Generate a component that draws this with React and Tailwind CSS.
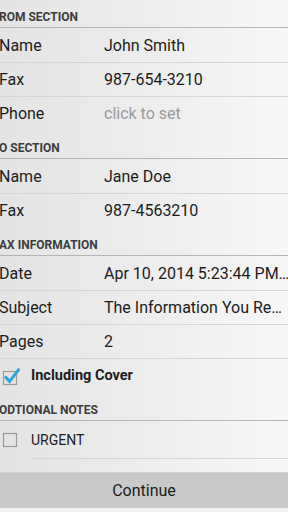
const font = { fontFamily: "Roboto, 'Liberation Sans', sans-serif" };

function Header({ text }) {
  return (
    <div className="h-[29px] flex flex-col">
      <div className="pt-[10px] leading-[14px] -ml-[1px] text-[12px] font-bold text-[#3c3c3c] whitespace-nowrap">
        {text}
      </div>
      <div className="mt-[3px] h-[1px] bg-[#b5b5b5]" />
    </div>
  );
}

function Row({ label, value, muted, last }) {
  return (
    <div className="h-[34px] flex flex-col">
      <div className="h-[33px] flex items-center text-[16px] text-[#1c1c1c] whitespace-nowrap">
        <div className="w-[105px] shrink-0 -ml-[1px]">{label}</div>
        <div className={muted ? "text-[#9a9a9a]" : "text-[#1c1c1c]"}>{value}</div>
      </div>
      {!last && <div className="h-[1px] bg-[#d6d6d6]" />}
    </div>
  );
}

function CheckedBox() {
  return (
    <svg width="18" height="18" viewBox="0 0 18 18">
      <rect x="1.5" y="3.5" width="13" height="13" fill="none" stroke="#9a9a9a" strokeWidth="1.2" />
      <path d="M4 9.5 L7.5 13.5 L16.5 2" fill="none" stroke="#2aa5d8" strokeWidth="3" strokeLinecap="square" />
    </svg>
  );
}

function EmptyBox() {
  return (
    <svg width="16" height="16" viewBox="0 0 16 16">
      <rect x="1.5" y="1.5" width="13" height="13" fill="none" stroke="#9a9a9a" strokeWidth="1.2" />
    </svg>
  );
}

export default function App() {
  return (
    <div
      style={font}
      className="w-[288px] h-[512px] overflow-hidden flex flex-col bg-gradient-to-r from-[#e4e4e4] via-[#ededed] to-[#f7f7f7]"
    >
      <Header text="ROM SECTION" />
      <Row label="Name" value="John Smith" />
      <Row label="Fax" value="987-654-3210" />
      <Row label="Phone" value="click to set" muted last />
      <Header text="O SECTION" />
      <Row label="Name" value="Jane Doe" />
      <Row label="Fax" value="987-4563210" last />
      <Header text="AX INFORMATION" />
      <Row label="Date" value="Apr 10, 2014 5:23:44 PM…" />
      <Row label="Subject" value="The Information You Re…" />
      <Row label="Pages" value="2" />
      <div className="h-[34px] flex items-center">
        <div className="pl-[2px] pt-[1px] w-[31px] flex">
          <CheckedBox />
        </div>
        <span className="text-[14.5px] font-bold text-[#1c1c1c]">Including Cover</span>
      </div>
      <Header text="ODTIONAL NOTES" />
      <div className="h-[36px] flex items-center">
        <div className="pl-[2px] w-[31px] flex">
          <EmptyBox />
        </div>
        <span className="text-[14px] text-[#1c1c1c]">URGENT</span>
      </div>
      <div className="h-[1px] ml-[32px] bg-[#d6d6d6]" />
      <div className="h-[13px]" />
      <button className="h-[36px] w-full bg-[#c9c9c9] border-t border-[#d4d4d4] text-[16px] text-[#1c1c1c] flex items-center justify-center">
        Continue
      </button>
      <div className="flex-1 bg-[#f2f2f2]" />
    </div>
  );
}
